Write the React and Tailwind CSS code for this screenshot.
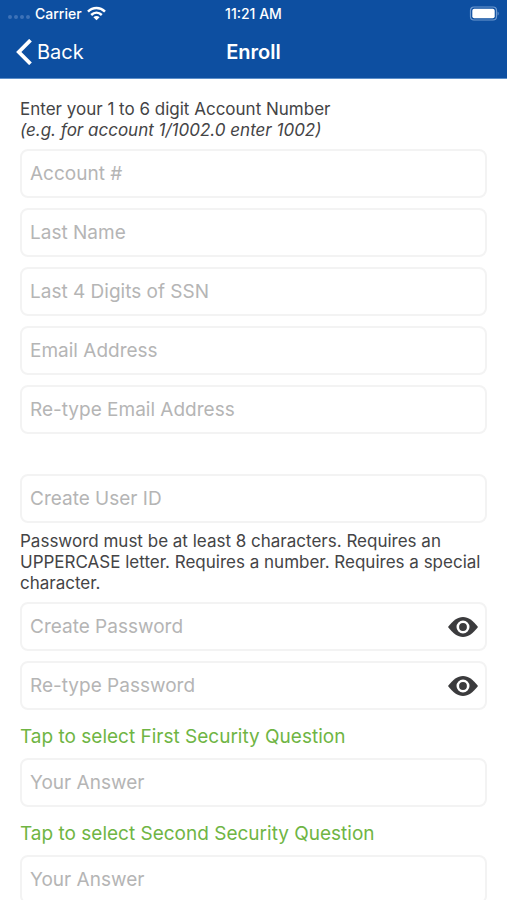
import React, { useState } from 'react';

const WifiIcon = () => (
  <svg width="19" height="15" viewBox="0 0 19 15" fill="none" stroke="#fff" strokeWidth="2.5" aria-hidden="true">
    <path d="M1 5.6C5.8 .9 13.2 .9 18 5.6" />
    <path d="M4.2 9C7.3 6 11.7 6 14.8 9" />
    <path d="M9.5 14.3 6.4 11.2C8.2 9.6 10.8 9.6 12.6 11.2Z" fill="#fff" stroke="none" />
  </svg>
);

const BatteryIcon = () => (
  <svg width="30" height="15" viewBox="0 0 30 15" aria-hidden="true">
    <rect x="1.5" y="1" width="26" height="13" rx="3.5" fill="none" stroke="#6f9ad0" strokeWidth="1.2" />
    <rect x="3.3" y="2.8" width="22.4" height="9.4" rx="2" fill="#fff" />
    <path d="M28.6 5.4C30 6 30 9 28.6 9.6Z" fill="#6f9ad0" />
  </svg>
);

const EyeIcon = () => (
  <svg width="30" height="20" viewBox="0 0 30 20" aria-hidden="true">
    <path d="M0 10C5 3.6 9.6 0 15 0S25 3.6 30 10C25 16.4 20.4 20 15 20S5 16.4 0 10Z" fill="#3b3b3d" />
    <circle cx="15" cy="10" r="5.2" fill="#3b3b3d" stroke="#fff" strokeWidth="2.6" />
  </svg>
);

const inputClass =
  'h-[49px] w-full rounded-lg border-2 border-[#f3f3f3] bg-white px-2 text-[19px] text-[#444446] outline-none placeholder:text-[#b5b5b5] focus:border-[#0d4fa1]';

const Field = ({ label, type = 'text' }) => (
  <input className={inputClass} type={type} placeholder={label} aria-label={label} />
);

const PasswordField = ({ label }) => {
  const [visible, setVisible] = useState(false);

  return (
    <div className="relative">
      <Field label={label} type={visible ? 'text' : 'password'} />
      <button
        type="button"
        className="absolute inset-y-0 right-0 px-[9px]"
        aria-label={visible ? 'Hide password' : 'Show password'}
        onClick={() => setVisible(!visible)}
      >
        <EyeIcon />
      </button>
    </div>
  );
};

const SecurityQuestion = ({ order }) => (
  <div className="flex flex-col gap-2 pt-[14px]">
    <button type="button" className="self-start text-[19px] leading-[26px] text-[#6fb544]">
      Tap to select {order} Security Question
    </button>
    <input className={inputClass} type="text" placeholder="Your Answer" aria-label={`${order} security answer`} />
  </div>
);

const App = () => {
  return (
    <div className="flex h-screen flex-col bg-white font-['Inter',sans-serif] text-[#444446]">
      <header className="shrink-0 border-b border-[#5d8fc9] bg-[#0d4fa1] text-white">
        {/* Status bar */}
        <div className="grid h-[26px] grid-cols-3 items-center px-2 text-[14px] font-medium">
          <div className="flex items-center gap-[5px]">
            <div className="flex gap-[2px] pt-2">
              {[0, 1, 2, 3].map(i => <span key={i} className="size-[4px] rounded-full bg-[#3d72b8]" />)}
            </div>
            <span>Carrier</span>
            <WifiIcon />
          </div>
          <span className="text-center">11:21 AM</span>
          <div className="flex justify-end"><BatteryIcon /></div>
        </div>

        {/* Navigation bar */}
        <nav className="grid h-[52px] grid-cols-3 items-center px-4">
          <button type="button" className="flex items-center gap-[5px] text-[20px]">
            <svg width="16" height="26" viewBox="0 0 16 26" fill="none" stroke="#fff" strokeWidth="3.8" aria-hidden="true">
              <path d="M14.5 1.2 2.8 13 14.5 24.8" />
            </svg>
            Back
          </button>
          <h1 className="text-center text-[20px] font-semibold">Enroll</h1>
        </nav>
      </header>

      <form className="min-h-0 flex-1 overflow-y-auto px-5 pt-5 pb-8 [scrollbar-width:none]">
        <p className="pb-2 text-[17px] leading-[21px]">
          Enter your 1 to 6 digit Account Number
          <br />
          <em>(e.g. for account 1/1002.0 enter 1002)</em>
        </p>

        <div className="flex flex-col gap-[10px]">
          <Field label="Account #" />
          <Field label="Last Name" />
          <Field label="Last 4 Digits of SSN" />
          <Field label="Email Address" type="email" />
          <Field label="Re-type Email Address" type="email" />
        </div>

        <div className="pt-10">
          <Field label="Create User ID" />
        </div>

        <p className="py-2 text-[17px] leading-[21px]">
          Password must be at least 8 characters. Requires an UPPERCASE letter. Requires a number. Requires a special character.
        </p>

        <div className="flex flex-col gap-[10px]">
          <PasswordField label="Create Password" />
          <PasswordField label="Re-type Password" />
        </div>

        <SecurityQuestion order="First" />
        <SecurityQuestion order="Second" />
      </form>
    </div>
  );
};

export default App;
